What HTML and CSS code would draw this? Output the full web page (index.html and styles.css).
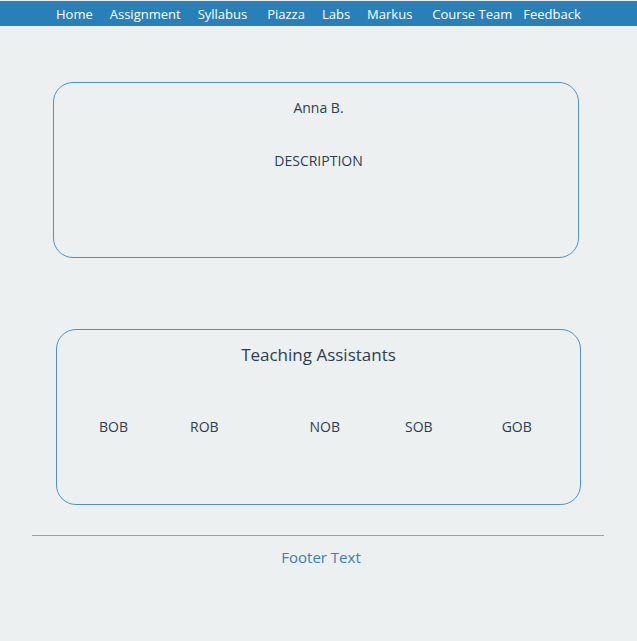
FILE: index.html
```html
<!DOCTYPE html>
<html>
<head>
<meta charset="utf-8">
<link rel="stylesheet" href="styles.css">
</head>
<body>
<nav class="nav">
  <a class="nav-item">Home</a>
  <a class="nav-item">Assignment</a>
  <a class="nav-item">Syllabus</a>
  <a class="nav-item wide">Piazza</a>
  <a class="nav-item">Labs</a>
  <a class="nav-item">Markus</a>
  <a class="nav-item wide">Course Team</a>
  <a class="nav-item tight">Feedback</a>
</nav>
<main class="main">
  <section class="card card-prof">
    <div class="prof-name">Anna B.</div>
    <div class="prof-desc">DESCRIPTION</div>
  </section>
  <section class="card card-ta">
    <h2 class="ta-title">Teaching Assistants</h2>
    <div class="ta-row">
      <span class="ta ta-1">BOB</span>
      <span class="ta ta-2">ROB</span>
      <span class="ta ta-3">NOB</span>
      <span class="ta ta-4">SOB</span>
      <span class="ta ta-5">GOB</span>
    </div>
  </section>
  <footer class="footer">
    <div class="footer-text">Footer Text</div>
  </footer>
</main>
</body>
</html>
```
FILE: styles.css
```css
html, body {
  margin: 0;
  padding: 0;
}
body {
  background: #ecf0f1;
  font-family: "Open Sans", "Liberation Sans", sans-serif;
  color: #2c3e50;
  width: 637px;
  height: 641px;
  overflow: hidden;
}
.nav {
  margin-top: 1px;
  height: 25px;
  background: #2980b9;
  display: flex;
  align-items: center;
  padding-left: 56px;
  box-sizing: border-box;
}
.nav-item {
  color: #ffffff;
  font-size: 13px;
  margin-right: 17px;
  white-space: nowrap;
}
.nav-item.wide { margin-left: 3px; }
.nav-item.tight { margin-left: -6px; }
.main {
  display: flex;
  flex-direction: column;
}
.card {
  border: 1px solid #4d93c6;
  border-radius: 20px;
  box-sizing: border-box;
  height: 176px;
}
.card-prof {
  margin: 56px 0 0 53px;
  width: 526px;
  display: flex;
  flex-direction: column;
  align-items: center;
  padding-top: 15px;
  padding-left: 5px;
}
.prof-name {
  font-size: 14px;
  line-height: 20px;
}
.prof-desc {
  font-size: 14px;
  line-height: 20px;
  margin-top: 33px;
}
.card-ta {
  margin: 71px 0 0 56px;
  width: 525px;
}
.ta-title {
  margin: 14px 0 0;
  font-weight: normal;
  font-size: 17px;
  line-height: 22px;
  text-align: center;
  padding-left: 0;
}
.ta-row {
  display: flex;
  margin-top: 51px;
  padding-left: 42px;
}
.ta {
  font-size: 14px;
  line-height: 20px;
}
.ta-2 { margin-left: 62px; }
.ta-3 { margin-left: 91px; }
.ta-4 { margin-left: 65px; }
.ta-5 { margin-left: 69px; }
.footer {
  margin: 30px 0 0 32px;
  width: 572px;
  border-top: 1px solid #8aa2c8;
}
.footer-text {
  text-align: center;
  color: #3b7fb5;
  font-size: 15px;
  line-height: 20px;
  margin-top: 11px;
  padding-left: 6px;
}
```
